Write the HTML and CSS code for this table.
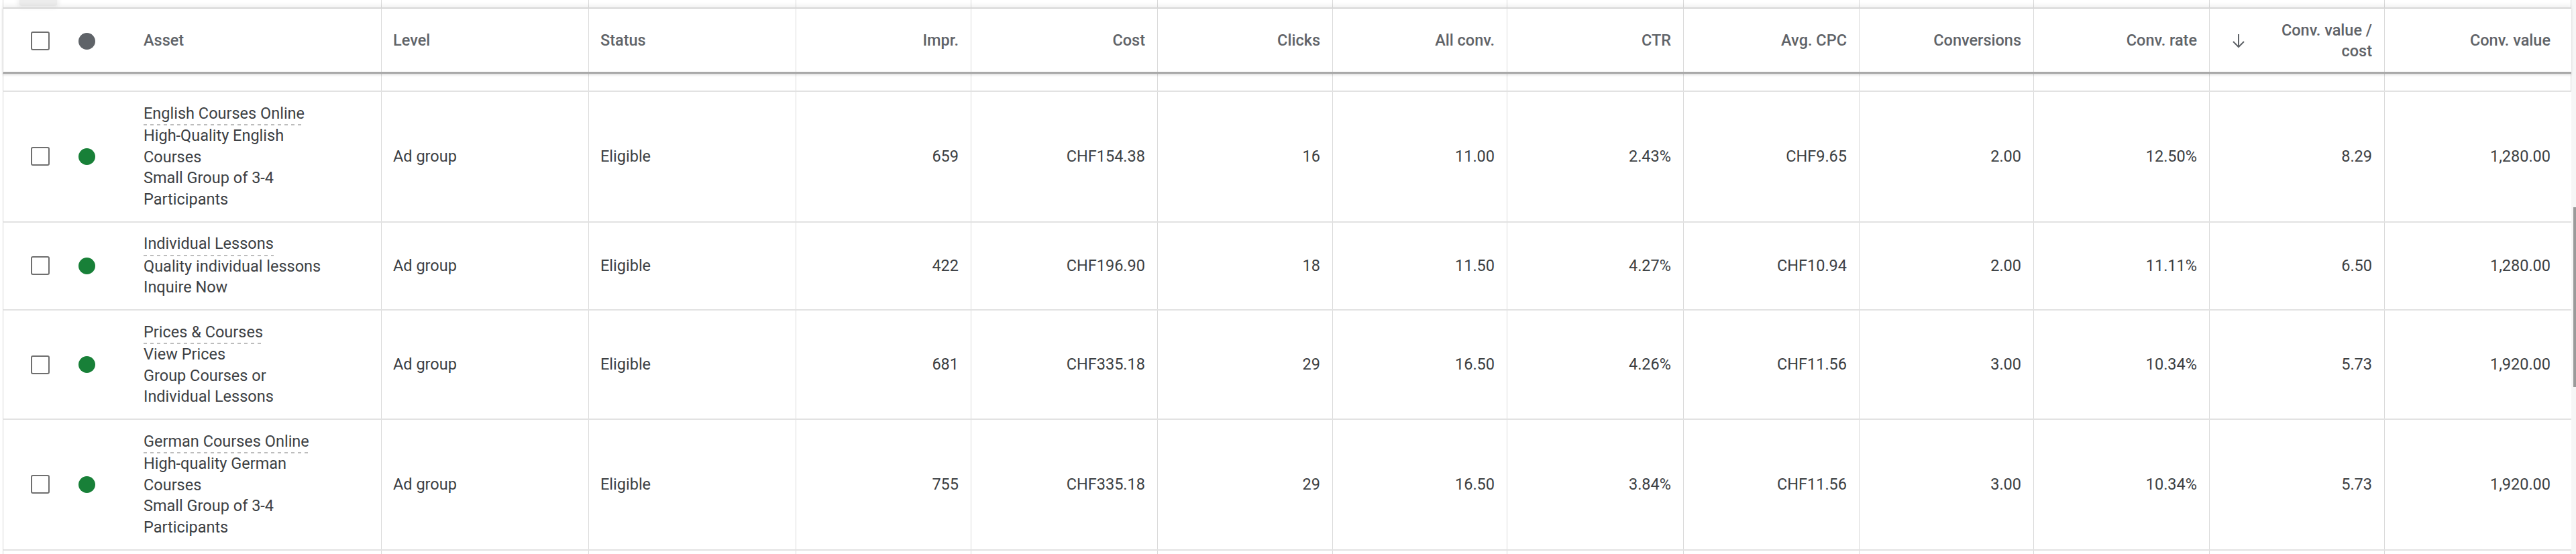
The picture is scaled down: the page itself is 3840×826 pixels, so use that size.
FILE: index.html
```html
<!DOCTYPE html>
<html lang="en">
<head>
<meta charset="utf-8">
<title>Assets</title>
<link rel="stylesheet" href="styles.css">
</head>
<body>
<div class="page">
  <div class="table">
    <div class="grid strip">
      <div class="cell"><span class="ghost"></span></div><div class="cell"></div><div class="cell"></div><div class="cell"></div><div class="cell"></div><div class="cell"></div><div class="cell"></div><div class="cell"></div><div class="cell"></div><div class="cell"></div><div class="cell"></div><div class="cell"></div><div class="cell"></div>
    </div>
    <div class="grid head">
      <div class="cell asset"><span class="cb"></span><span class="dot grey"></span><span class="htext">Asset</span></div>
      <div class="cell">Level</div>
      <div class="cell">Status</div>
      <div class="cell num">Impr.</div>
      <div class="cell num">Cost</div>
      <div class="cell num">Clicks</div>
      <div class="cell num">All conv.</div>
      <div class="cell num">CTR</div>
      <div class="cell num">Avg. CPC</div>
      <div class="cell num">Conversions</div>
      <div class="cell num">Conv. rate</div>
      <div class="cell num sorted">
        <svg class="arrow" width="22" height="22" viewBox="0 0 22 22"><path d="M11 1 V20 M3 12 L11 20 L19 12" fill="none" stroke="#5f6368" stroke-width="2"/></svg>
        <span class="wrap">Conv. value / cost</span>
      </div>
      <div class="cell num last">Conv. value</div>
    </div>
    <div class="grid blank">
      <div class="cell"></div><div class="cell"></div><div class="cell"></div><div class="cell"></div><div class="cell"></div><div class="cell"></div><div class="cell"></div><div class="cell"></div><div class="cell"></div><div class="cell"></div><div class="cell"></div><div class="cell"></div><div class="cell"></div>
    </div>

    <div class="grid row">
      <div class="cell asset"><span class="cb"></span><span class="dot green"></span>
        <div class="atext"><span class="headline">English Courses Online</span><div>High-Quality English Courses</div><div>Small Group of 3-4 Participants</div></div>
      </div>
      <div class="cell">Ad group</div>
      <div class="cell">Eligible</div>
      <div class="cell num">659</div>
      <div class="cell num">CHF154.38</div>
      <div class="cell num">16</div>
      <div class="cell num">11.00</div>
      <div class="cell num">2.43%</div>
      <div class="cell num">CHF9.65</div>
      <div class="cell num">2.00</div>
      <div class="cell num">12.50%</div>
      <div class="cell num">8.29</div>
      <div class="cell num last">1,280.00</div>
    </div>

    <div class="grid row">
      <div class="cell asset"><span class="cb"></span><span class="dot green"></span>
        <div class="atext"><span class="headline">Individual Lessons</span><div>Quality individual lessons</div><div>Inquire Now</div></div>
      </div>
      <div class="cell">Ad group</div>
      <div class="cell">Eligible</div>
      <div class="cell num">422</div>
      <div class="cell num">CHF196.90</div>
      <div class="cell num">18</div>
      <div class="cell num">11.50</div>
      <div class="cell num">4.27%</div>
      <div class="cell num">CHF10.94</div>
      <div class="cell num">2.00</div>
      <div class="cell num">11.11%</div>
      <div class="cell num">6.50</div>
      <div class="cell num last">1,280.00</div>
    </div>

    <div class="grid row">
      <div class="cell asset"><span class="cb"></span><span class="dot green"></span>
        <div class="atext"><span class="headline">Prices &amp; Courses</span><div>View Prices</div><div>Group Courses or Individual Lessons</div></div>
      </div>
      <div class="cell">Ad group</div>
      <div class="cell">Eligible</div>
      <div class="cell num">681</div>
      <div class="cell num">CHF335.18</div>
      <div class="cell num">29</div>
      <div class="cell num">16.50</div>
      <div class="cell num">4.26%</div>
      <div class="cell num">CHF11.56</div>
      <div class="cell num">3.00</div>
      <div class="cell num">10.34%</div>
      <div class="cell num">5.73</div>
      <div class="cell num last">1,920.00</div>
    </div>

    <div class="grid row">
      <div class="cell asset"><span class="cb"></span><span class="dot green"></span>
        <div class="atext"><span class="headline">German Courses Online</span><div>High-quality German Courses</div><div>Small Group of 3-4 Participants</div></div>
      </div>
      <div class="cell">Ad group</div>
      <div class="cell">Eligible</div>
      <div class="cell num">755</div>
      <div class="cell num">CHF335.18</div>
      <div class="cell num">29</div>
      <div class="cell num">16.50</div>
      <div class="cell num">3.84%</div>
      <div class="cell num">CHF11.56</div>
      <div class="cell num">3.00</div>
      <div class="cell num">10.34%</div>
      <div class="cell num">5.73</div>
      <div class="cell num last">1,920.00</div>
    </div>

    <div class="grid tail">
      <div class="cell"></div><div class="cell"></div><div class="cell"></div><div class="cell"></div><div class="cell"></div><div class="cell"></div><div class="cell"></div><div class="cell"></div><div class="cell"></div><div class="cell"></div><div class="cell"></div><div class="cell"></div><div class="cell"></div>
    </div>
  </div>
  <div class="scrollbar"><div class="thumb"></div></div>
</div>
</body>
</html>
```
FILE: styles.css
```css
* { box-sizing: border-box; }
html, body { margin: 0; padding: 0; background: #fff; }
body {
  font-family: Roboto, "Liberation Sans", Arial, sans-serif;
  font-size: 23.5px;
  line-height: 31.5px;
  color: #3c4043;
  overflow: hidden;
}
.page {
  display: flex;
  width: 3840px;
  height: 826px;
  overflow: hidden;
}
.table {
  width: 3833px;
  padding-left: 4px;
  display: flex;
  flex-direction: column;
}
.table > .grid { border-left: 1px solid #d6d6d6; }
.grid {
  display: grid;
  grid-template-columns: 564px 309px 309px 261px 278px 261px 260px 263px 262px 260px 262px 261px 278px;
}
.cell {
  display: flex;
  align-items: center;
  padding: 0 17px;
  border-right: 1px solid #dadada;
  min-width: 0;
}
.cell.last { border-right: none; padding-right: 31px; }
.cell.num { justify-content: flex-end; text-align: right; padding-right: 18px; }
.cell.num.last { padding-right: 31px; }

.strip { height: 11px; }
.strip .cell { padding: 0; align-items: flex-start; }
.ghost {
  display: block;
  width: 56px;
  height: 9px;
  margin-left: 24px;
  background: #ececec;
  border-radius: 0 0 4px 4px;
  box-shadow: 0 0 6px 3px #f1f1f1;
}

.head {
  height: 99px;
  border-top: 2px solid #d7d7d7;
  border-bottom: 3px solid #a9a9a9;
  box-shadow: 0 -4px 6px rgba(0,0,0,0.05), 0 2px 3px rgba(0,0,0,0.12);
  color: #5f6368;
  font-weight: 500;
  position: relative;
}
.head .cell { padding-top: 2px; }
.cell.num.sorted { justify-content: space-between; padding-left: 32px; }
.arrow { display: block; flex: none; }
.wrap { display: block; max-width: 150px; text-align: right; }

.blank { height: 27px; border-bottom: 2px solid #e2e2e2; }

.row { border-bottom: 2px solid #e2e2e2; }
.row .cell { padding-top: 16.5px; padding-bottom: 16.5px; }

.tail { flex: 1; }

.asset { padding-left: 41px; }
.cb {
  flex: none;
  width: 28px;
  height: 28px;
  border: 2.5px solid #6f6f6f;
  border-radius: 3px;
  background: #fff;
}
.dot {
  flex: none;
  width: 25px;
  height: 25px;
  border-radius: 50%;
  margin-left: 43px;
}
.dot.grey { background: #5f6368; }
.dot.green { background: #188038; }
.htext { margin-left: 72px; }
.atext { margin-left: 72px; width: 285px; }
.headline {
  display: block;
  width: fit-content;
  padding-bottom: 2px;
  background: linear-gradient(to right, #bdbdbd 50%, transparent 50%) left bottom / 10px 2px repeat-x;
}

.scrollbar {
  width: 7px;
  height: 826px;
  padding: 309px 0 0 3px;
  background: #f6f6f6;
}
.thumb {
  width: 4px;
  height: 268px;
  background: #9a9a9a;
}
```
